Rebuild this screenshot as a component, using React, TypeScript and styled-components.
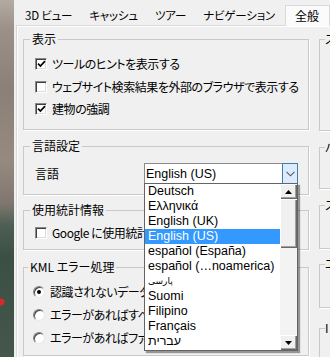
import * as React from 'react';
import styled, { createGlobalStyle } from 'styled-components';

const GlobalStyle = createGlobalStyle`
  html, body {
    margin: 0;
    padding: 0;
    background: #f0f0f0;
  }
  body {
    font-family: "Noto Sans CJK JP", "Noto Sans", sans-serif;
    font-size: 12px;
    color: #000;
    font-feature-settings: "palt";
  }
`;

const LANGUAGES: { label: string; small?: boolean }[] = [
  { label: 'Deutsch' },
  { label: 'Ελληνικά' },
  { label: 'English (UK)' },
  { label: 'English (US)' },
  { label: 'español (España)' },
  { label: 'español (…noamerica)' },
  { label: 'پارسی', small: true },
  { label: 'Suomi' },
  { label: 'Filipino' },
  { label: 'Français' },
  { label: 'עברית' },
];
const SELECTED = 'English (US)';

const Screen = styled.div`
  display: flex;
  width: 330px;
  height: 357px;
  overflow: hidden;
  background: #f0f0f0;
`;

const Desktop = styled.div`
  flex: 0 0 14px;
  background:
    radial-gradient(circle at 1px 302px, #d42a2a 0 3px, transparent 4px),
    linear-gradient(
      180deg,
      #b3aaa2 0%,
      #9c9189 8%,
      #8b8077 25%,
      #968a80 45%,
      #7f776f 57%,
      #4e5f54 63%,
      #3c4f45 72%,
      #45574c 100%
    );
`;

const Dialog = styled.div`
  flex: 1;
  min-width: 0;
  display: flex;
  flex-direction: column;
  padding: 5px 0 0 2px;
  overflow: hidden;
`;

const TabBar = styled.div`
  flex: 0 0 20px;
  display: flex;
  align-items: stretch;
  white-space: nowrap;
`;

const Tab = styled.div<{ $selected?: boolean }>`
  display: flex;
  align-items: center;
  padding: ${(p) => (p.$selected ? '0 10px 0 9px' : '0 8px 0 9px')};
  font-size: ${(p) => (p.$selected ? '12px' : '11.5px')};
  letter-spacing: ${(p) => (p.$selected ? '0' : '-0.2px')};
  line-height: 14px;
  background: ${(p) => (p.$selected ? '#fbfbfb' : 'transparent')};
  border: ${(p) => (p.$selected ? '1px solid #d9d9d9' : 'none')};
  border-bottom: none;
  margin-left: ${(p) => (p.$selected ? '2px' : '0')};
  margin-bottom: ${(p) => (p.$selected ? '-1px' : '0')};
  position: relative;
  z-index: ${(p) => (p.$selected ? 1 : 0)};
`;

const TabSep = styled.span`
  align-self: center;
  width: 1px;
  height: 14px;
  background: #8c8c8c;
`;

const Panel = styled.div`
  flex: 1;
  min-height: 0;
  overflow: hidden;
  display: flex;
  gap: 10px;
  padding: 6px 0 0 6px;
  border-top: 1px solid #d9d9d9;
  border-left: 1px solid #d9d9d9;
  box-shadow: inset 1px 1px 0 #fff;
`;

const Column = styled.div<{ $w: number }>`
  flex: 0 0 ${(p) => p.$w}px;
  display: flex;
  flex-direction: column;
`;

const Group = styled.fieldset<{ $h: number; $mt?: number; $pl?: number }>`
  box-sizing: border-box;
  flex: 0 0 auto;
  height: ${(p) => p.$h}px;
  margin: ${(p) => p.$mt ?? 0}px 0 0;
  padding: 0 0 0 ${(p) => p.$pl ?? 6}px;
  min-width: 0;
  border: 1px solid #c9c9c9;
  box-shadow: 1px 1px 0 #fff;
`;

const Legend = styled.legend<{ $pad?: number }>`
  padding: 0 ${(p) => p.$pad ?? 2}px;
  line-height: 14px;
  white-space: nowrap;
`;

const GroupBody = styled.div<{ $pt: number }>`
  display: flex;
  flex-direction: column;
  padding: ${(p) => p.$pt}px 0 0 5px;
`;

const OptionRow = styled.label<{ $h: number }>`
  display: flex;
  align-items: center;
  gap: 5px;
  height: ${(p) => p.$h}px;
  line-height: 14px;
  white-space: nowrap;
  letter-spacing: -0.45px;
`;

const CheckBox = styled.span`
  box-sizing: border-box;
  flex: 0 0 12px;
  height: 12px;
  display: flex;
  align-items: center;
  justify-content: center;
  background: #fff;
  border-style: solid;
  border-width: 1px;
  border-color: #8a8a8a #ffffff #ffffff #8a8a8a;
  box-shadow: inset 1px 1px 0 #404040, inset -1px -1px 0 #dcdcdc;
`;

const Radio = styled.span`
  box-sizing: border-box;
  flex: 0 0 12px;
  height: 12px;
  border-radius: 50%;
  display: flex;
  align-items: center;
  justify-content: center;
  background: #fff;
  border: 1px solid;
  border-color: #808080 #e8e8e8 #e8e8e8 #808080;
  box-shadow: inset 1px 1px 0 #404040;
`;

const RadioDot = styled.span`
  width: 4px;
  height: 4px;
  border-radius: 50%;
  background: #000;
`;

const ComboRow = styled.div`
  display: flex;
  align-items: center;
  height: 21px;
`;

const ComboLabel = styled.span`
  flex: 0 0 109px;
  line-height: 14px;
`;

const Combo = styled.div`
  position: relative;
  box-sizing: border-box;
  width: 154px;
  height: 21px;
  display: flex;
  align-items: stretch;
  background: #fff;
  border: 1px solid #8a8a8a;
  border-right: none;
  font-family: "Liberation Sans", Arial, sans-serif;
  font-size: 12.5px;
  font-feature-settings: normal;
`;

const ComboValue = styled.span`
  flex: 1;
  display: flex;
  align-items: center;
  padding-left: 1px;
`;

const ComboButton = styled.span`
  box-sizing: border-box;
  flex: 0 0 16px;
  margin: -1px 0;
  display: flex;
  align-items: center;
  justify-content: center;
  background: #dcecfc;
  border: 1px solid #3c7fb1;
`;

const DropList = styled.div`
  position: absolute;
  top: 100%;
  left: -1px;
  z-index: 10;
  box-sizing: border-box;
  width: 154px;
  height: 168px;
  display: flex;
  background: #fff;
  border: 1px solid #646464;
  box-shadow: 2px 2px 1px rgba(0, 0, 0, 0.38);
`;

const Items = styled.div`
  flex: 1;
  display: flex;
  flex-direction: column;
`;

const Item = styled.div<{ $active?: boolean; $small?: boolean }>`
  height: 15px;
  line-height: 15px;
  padding-left: 3px;
  white-space: nowrap;
  font-family: ${(p) => (p.$small ? '"DejaVu Sans", sans-serif' : 'inherit')};
  font-size: ${(p) => (p.$small ? '9px' : 'inherit')};
  background: ${(p) => (p.$active ? '#3399ff' : 'transparent')};
  color: ${(p) => (p.$active ? '#fff' : '#000')};
`;

const ScrollBar = styled.div`
  flex: 0 0 17px;
  display: flex;
  flex-direction: column;
  background: #f3f3f3;
`;

const ScrollPart = styled.div<{ $h: number }>`
  box-sizing: border-box;
  height: ${(p) => p.$h}px;
  display: flex;
  align-items: center;
  justify-content: center;
  background: #f0f0f0;
  box-shadow:
    inset 1px 1px 0 #fff,
    inset -1px -1px 0 #696969,
    inset -2px -2px 0 #a0a0a0;
`;

const ScrollTrack = styled.div`
  flex: 1;
`;

const Arrow = ({ down }: { down?: boolean }) => (
  <svg width="7" height="4" viewBox="0 0 7 4">
    <polygon points={down ? '0,0 7,0 3.5,4' : '3.5,0 7,4 0,4'} fill="#000" />
  </svg>
);

const Check = () => (
  <svg width="9" height="8" viewBox="0 0 9 8">
    <path d="M1 3.6 L3.4 6 L8 1.2" fill="none" stroke="#000" strokeWidth="1.7" />
  </svg>
);

const Chevron = () => (
  <svg width="9" height="6" viewBox="0 0 9 6">
    <path d="M0.5 0.8 L4.5 4.8 L8.5 0.8" fill="none" stroke="#5a5a5a" strokeWidth="1.1" />
  </svg>
);

const Option: React.FC<{
  checked?: boolean;
  radio?: boolean;
  h?: number;
  children: React.ReactNode;
}> = ({ checked, radio, h = 22, children }) => (
  <OptionRow $h={h}>
    {radio ? (
      <Radio>{checked && <RadioDot />}</Radio>
    ) : (
      <CheckBox>{checked && <Check />}</CheckBox>
    )}
    <span>{children}</span>
  </OptionRow>
);

const LanguageCombo = () => (
  <Combo>
    <ComboValue>{SELECTED}</ComboValue>
    <ComboButton>
      <Chevron />
    </ComboButton>
    <DropList>
      <Items>
        {LANGUAGES.map((lang) => (
          <Item key={lang.label} $active={lang.label === SELECTED} $small={lang.small}>
            {lang.label}
          </Item>
        ))}
      </Items>
      <ScrollBar>
        <ScrollPart $h={15}>
          <Arrow />
        </ScrollPart>
        <ScrollPart $h={49} />
        <ScrollTrack />
        <ScrollPart $h={15}>
          <Arrow down />
        </ScrollPart>
      </ScrollBar>
    </DropList>
  </Combo>
);

export default function App() {
  return (
    <>
      <GlobalStyle />
      <Screen>
        <Desktop />
        <Dialog>
          <TabBar>
            <Tab>3D ビュー</Tab>
            <TabSep />
            <Tab>キャッシュ</Tab>
            <TabSep />
            <Tab>ツアー</Tab>
            <TabSep />
            <Tab>ナビゲーション</Tab>
            <Tab $selected>全般</Tab>
          </TabBar>
          <Panel>
            <Column $w={286}>
              <Group $h={98}>
                <Legend>表示</Legend>
                <GroupBody $pt={6}>
                  <Option checked h={23}>ツールのヒントを表示する</Option>
                  <Option h={23}>ウェブサイト検索結果を外部のブラウザで表示する</Option>
                  <Option checked h={22}>建物の強調</Option>
                </GroupBody>
              </Group>
              <Group $h={56} $mt={9}>
                <Legend>言語設定</Legend>
                <GroupBody $pt={10}>
                  <ComboRow>
                    <ComboLabel>言語</ComboLabel>
                    <LanguageCombo />
                  </ComboRow>
                </GroupBody>
              </Group>
              <Group $h={47} $mt={8}>
                <Legend>使用統計情報</Legend>
                <GroupBody $pt={5}>
                  <Option>Google に使用統計情報を送信する</Option>
                </GroupBody>
              </Group>
              <Group $h={96} $mt={10} $pl={4}>
                <Legend>KML エラー処理</Legend>
                <GroupBody $pt={6}>
                  <Option radio checked h={23}>
                    認識されないデータを通知せずに受け入れる
                  </Option>
                  <Option radio h={23}>
                    エラーがあればすべてプロンプトを表示する
                  </Option>
                  <Option radio h={23}>
                    エラーがあればファイルの読み込みを中止する
                  </Option>
                </GroupBody>
              </Group>
            </Column>
            <Column $w={160}>
              <Group $h={99} $pl={5}>
                <Legend $pad={0}>スタートアップ</Legend>
              </Group>
              <Group $h={49} $mt={9} $pl={5}>
                <Legend $pad={0}>バルーン表示</Legend>
              </Group>
              <Group $h={51} $mt={9} $pl={5}>
                <Legend $pad={0}>ステータス バー</Legend>
              </Group>
              <Group $h={51} $mt={8} $pl={5}>
                <Legend $pad={0}>エリア表示</Legend>
              </Group>
              <Group $h={60} $mt={13} $pl={5}>
                <Legend $pad={0}>I ファイル</Legend>
              </Group>
            </Column>
          </Panel>
        </Dialog>
      </Screen>
    </>
  );
}
